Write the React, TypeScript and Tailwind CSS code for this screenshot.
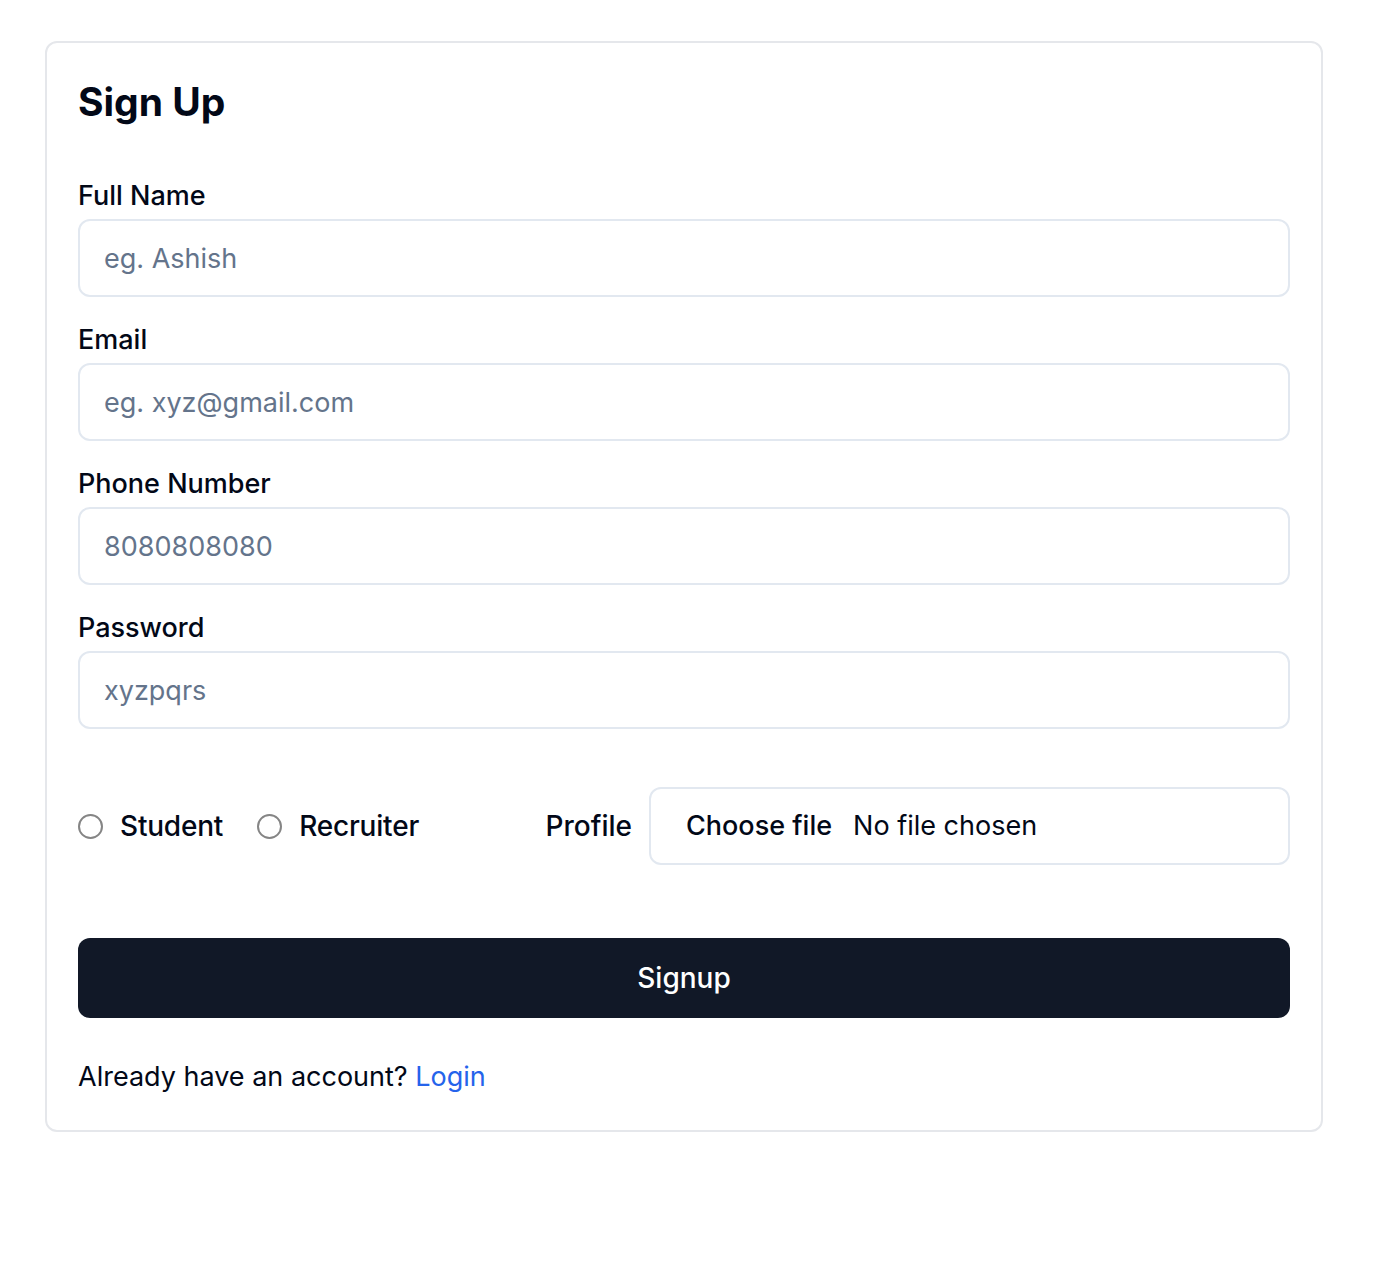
const fields = [
  { id: 1, label: 'Full Name', placeholder: 'eg. Ashish' },
  { id: 2, label: 'Email', placeholder: 'eg. xyz@gmail.com' },
  { id: 3, label: 'Phone Number', placeholder: '8080808080' },
  { id: 4, label: 'Password', placeholder: 'xyzpqrs' }
]

const roles = ['Student', 'Recruiter']

const Field = ({ label, placeholder }: { label: string; placeholder: string }) => {
  return (
    <div className="flex flex-col">
      <label className="h-[28px] text-[27px] leading-[28px] font-medium text-[#020817]">
        {label}
      </label>
      <input
        className="mt-[9px] h-[78px] rounded-[12px] border-2 border-[#e2e8f0] bg-white px-[24px] text-[27px] text-[#020817] outline-none placeholder:text-[#64748b]"
        placeholder={placeholder}
      />
    </div>
  )
}

const App = () => {
  return (
    <div className="min-h-[1274px] bg-white font-['Inter',sans-serif] text-[#020817]">
      <div className="pt-[41px] pl-[45px]">
        <form className="flex w-[1278px] flex-col rounded-[12px] border-2 border-[#e5e7eb] px-[31px] pt-[29px] pb-[35px]">
          <h1 className="text-[39px] leading-[60px] font-bold">Sign Up</h1>

          <div className="mt-[50px] flex flex-col gap-[29px]">
            {fields.map((f) => (
              <Field key={f.id} label={f.label} placeholder={f.placeholder} />
            ))}
          </div>

          <div className="mt-[58px] flex items-center">
            <div className="flex items-center gap-[34px]">
              {roles.map((role) => (
                <label key={role} className="flex items-center gap-[17px]">
                  <span className="h-[25px] w-[25px] rounded-full border-2 border-[#858585] bg-white" />
                  <span className="text-[28px] font-medium tracking-[-0.2px]">{role}</span>
                </label>
              ))}
            </div>
            <div className="ml-auto flex items-center gap-[17px]">
              <span className="text-[28px] font-medium">Profile</span>
              <div className="flex h-[78px] w-[641px] items-center rounded-[12px] border-2 border-[#e2e8f0] px-[35px] text-[27px]">
                <span className="font-medium">Choose file</span>
                <span className="ml-[21px]">No file chosen</span>
              </div>
            </div>
          </div>

          <button
            type="button"
            className="mt-[73px] h-[80px] rounded-[12px] bg-[#111827] text-[28px] font-medium text-white"
          >
            Signup
          </button>

          <p className="mt-[41px] text-[27px] leading-[36px]">
            Already have an account?{' '}
            <a href="#" className="text-[#2563eb]">
              Login
            </a>
          </p>
        </form>
      </div>
    </div>
  )
}

export default App
